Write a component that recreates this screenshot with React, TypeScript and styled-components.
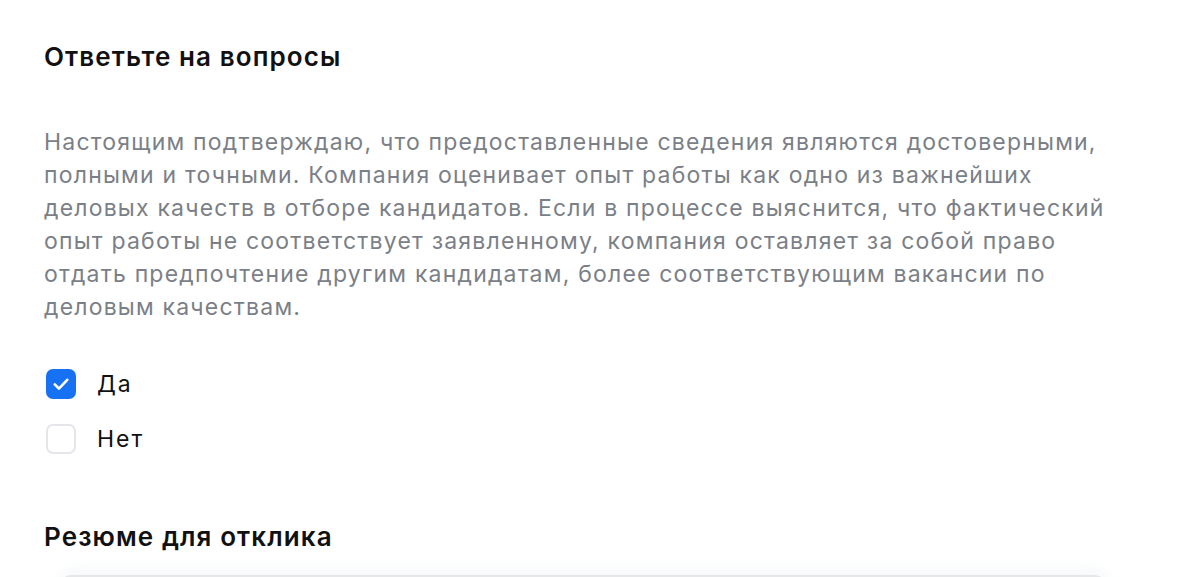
import styled, { createGlobalStyle } from 'styled-components'
import { useState } from 'react'

/**
 * Data
 */
const noticeLines = [
  'Настоящим подтверждаю, что предоставленные сведения являются достоверными,',
  'полными и точными. Компания оценивает опыт работы как одно из важнейших',
  'деловых качеств в отборе кандидатов. Если в процессе выяснится, что фактический',
  'опыт работы не соответствует заявленному, компания оставляет за собой право',
  'отдать предпочтение другим кандидатам, более соответствующим вакансии по',
  'деловым качествам.'
]

/**
 * Style
 */
const GlobalStyle = createGlobalStyle`
  html, body {
    margin: 0;
    padding: 0;
    background: #fff;
  }

  body {
    font-family: Inter, "Noto Sans", "Liberation Sans", sans-serif;
    color: #111;
  }
`

const Page = styled.div`
  display: flex;
  flex-direction: column;
  padding: 40px 44px 0 44px;
  width: 1100px;
`

const Title = styled.h2`
  margin: 0;
  font-size: 26px;
  line-height: 34px;
  font-weight: 600;
  letter-spacing: 1.1px;
  color: #111;
`

const Notice = styled.p`
  margin: 52px 0 0 0;
  font-size: 23px;
  line-height: 33px;
  font-weight: 400;
  letter-spacing: 1.2px;
  white-space: nowrap;
  color: #7b7f87;
`

const Options = styled.div`
  display: flex;
  flex-direction: column;
  gap: 25px;
  margin-top: 45px;
`

const Option = styled.label`
  display: flex;
  align-items: center;
  gap: 21px;
  font-size: 23px;
  line-height: 30px;
  letter-spacing: 2px;
  color: #111;
  cursor: pointer;
  margin-left: 2px;
`

const Box = styled.span<{ $checked: boolean }>`
  display: flex;
  align-items: center;
  justify-content: center;
  flex: none;
  width: 30px;
  height: 30px;
  box-sizing: border-box;
  border-radius: 7px;
  background: ${(p) => (p.$checked ? '#1672f3' : '#fff')};
  border: ${(p) => (p.$checked ? 'none' : '2px solid #e4e6e9')};
`

const Section = styled.h2`
  margin: 66px 0 0 0;
  font-size: 26px;
  line-height: 34px;
  font-weight: 600;
  letter-spacing: 1.1px;
  color: #111;
`

const Card = styled.div`
  margin: 21px 0 0 14px;
  width: 1046px;
  height: 80px;
  border: 2px solid #e6e7e9;
  border-radius: 14px;
  box-shadow: 0 -6px 14px rgba(200, 215, 230, 0.18);
`

/**
 * Component
 */
const Check = (): JSX.Element => (
  <svg width="20" height="20" viewBox="0 0 24 24" fill="none" stroke="#fff" strokeWidth="3.2" strokeLinecap="round" strokeLinejoin="round">
    <path d="M4.5 12.5l5 5L19.5 7" />
  </svg>
)

const App = (): JSX.Element => {
  const [answer, setAnswer] = useState<'yes' | 'no'>('yes')

  return (
    <>
      <GlobalStyle />
      <Page>
        <Title>Ответьте на вопросы</Title>
        <Notice>
          {noticeLines.map((line, i) => (
            <span key={i}>
              {line}
              {i < noticeLines.length - 1 && <br />}
            </span>
          ))}
        </Notice>
        <Options>
          <Option onClick={() => setAnswer('yes')}>
            <Box $checked={answer === 'yes'}>{answer === 'yes' && <Check />}</Box>
            Да
          </Option>
          <Option onClick={() => setAnswer('no')}>
            <Box $checked={answer === 'no'}>{answer === 'no' && <Check />}</Box>
            Нет
          </Option>
        </Options>
        <Section>Резюме для отклика</Section>
        <Card />
      </Page>
    </>
  )
}

export default App
